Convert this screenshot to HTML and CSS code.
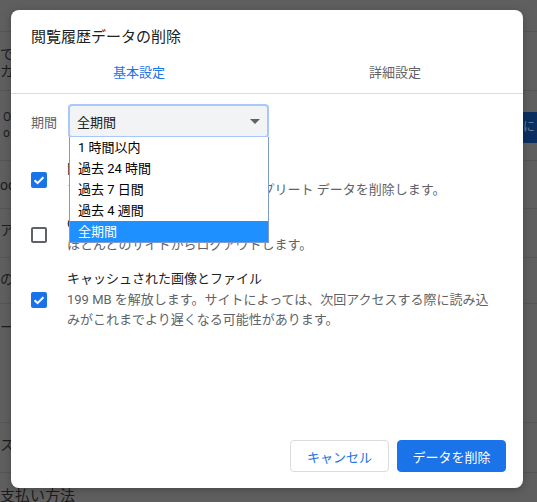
FILE: index.html
```html
<!DOCTYPE html>
<html lang="ja">
<head>
<meta charset="utf-8">
<link rel="stylesheet" href="styles.css">
</head>
<body>
<div class="page">
  <div class="row r0"></div>
  <div class="row r1"><p>でき</p><p>カ</p></div>
  <div class="row r2">
    <div class="r2-text"><p>O</p><p>o</p></div>
    <div class="band">に</div>
  </div>
  <div class="row r3"><p>oo</p></div>
  <div class="row r4"><p>アカ</p></div>
  <div class="row r5"><p>の</p></div>
  <div class="row r6"><p>ー</p></div>
  <div class="row r7"><p>ス</p></div>
  <div class="row r8"><p class="big">支払い方法</p></div>
</div>

<div class="dialog">
  <div class="title">閲覧履歴データの削除</div>
  <div class="tabs">
    <div class="tab active">基本設定</div>
    <div class="tab">詳細設定</div>
  </div>
  <div class="content">
    <div class="period">
      <span class="period-label">期間</span>
      <div class="select">
        <span>全期間</span>
        <span class="arrow"></span>
      </div>
      <ul class="options">
        <li>1 時間以内</li>
        <li>過去 24 時間</li>
        <li>過去 7 日間</li>
        <li>過去 4 週間</li>
        <li class="selected">全期間</li>
      </ul>
    </div>
    <div class="items">
      <div class="item">
        <span class="cb checked"><svg viewBox="0 0 16 16" width="16" height="16"><path d="M3.6 8.3 L6.6 11.2 L12.4 5.2" fill="none" stroke="#fff" stroke-width="2"/></svg></span>
        <div class="item-text">
          <div class="item-title">閲覧履歴</div>
          <div class="item-desc">アドレスバーの履歴とオートコンプリート データを削除します。</div>
        </div>
      </div>
      <div class="item">
        <span class="cb"></span>
        <div class="item-text">
          <div class="item-title">Cookie と他のサイトデータ</div>
          <div class="item-desc">ほとんどのサイトからログアウトします。</div>
        </div>
      </div>
      <div class="item">
        <span class="cb checked"><svg viewBox="0 0 16 16" width="16" height="16"><path d="M3.6 8.3 L6.6 11.2 L12.4 5.2" fill="none" stroke="#fff" stroke-width="2"/></svg></span>
        <div class="item-text">
          <div class="item-title">キャッシュされた画像とファイル</div>
          <div class="item-desc">199 MB を解放します。サイトによっては、次回アクセスする際に読み込みがこれまでより遅くなる可能性があります。</div>
        </div>
      </div>
    </div>
  </div>
  <div class="actions">
    <button class="btn cancel">キャンセル</button>
    <button class="btn primary">データを削除</button>
  </div>
</div>
</body>
</html>
```
FILE: styles.css
```css
* { box-sizing: border-box; }
html, body { margin: 0; padding: 0; }
body {
  width: 537px;
  height: 502px;
  overflow: hidden;
  background: #5f5f5f;
  font-family: Roboto, "Noto Sans CJK JP", sans-serif;
  position: relative;
}
p { margin: 0; }

/* dimmed page behind the dialog */
.page { color: #1c1c1c; font-size: 14px; }
.row { border-bottom: 1px solid #555555; }
.row p { line-height: 17px; white-space: nowrap; }
.r0 { height: 32px; }
.r1 { height: 59px; padding-top: 14px; }
.r2 { height: 70px; display: flex; justify-content: space-between; }
.r2-text { padding-top: 18px; padding-left: 3px; }
.r2-text p { font-size: 12px; line-height: 16px; }
.band {
  margin-top: 21px;
  width: 40px;
  height: 31px;
  background: #0b2f62;
  color: #6d7c96;
  font-size: 12px;
  line-height: 31px;
  padding-left: 26px;
}
.r3 { height: 48px; padding-top: 16px; }
.r4 { height: 49px; padding-top: 13px; }
.r5 { height: 46px; padding-top: 13px; }
.r6 { height: 119px; padding-top: 15px; }
.r7 { height: 50px; padding-top: 14px; }
.r8 { border-bottom: none; padding-top: 15px; }
.r8 .big { font-size: 15px; }

/* dialog */
.dialog {
  position: absolute;
  left: 11px;
  top: 10px;
  width: 512px;
  height: 478px;
  background: #fff;
  border-radius: 8px;
  box-shadow: 0 2px 8px rgba(0,0,0,0.25);
  display: flex;
  flex-direction: column;
}
.title {
  padding: 17px 20px 0;
  font-size: 15px;
  line-height: 20px;
  color: #202124;
}
.tabs {
  display: flex;
  border-bottom: 1px solid #dadce0;
}
.tab {
  flex: 1;
  text-align: center;
  font-size: 13px;
  line-height: 20px;
  padding: 16px 0 10px;
  color: #5f6368;
}
.tab.active { color: #1a73e8; }

.content { padding: 10px 20px 0; }
.period {
  position: relative;
  display: flex;
  align-items: center;
}
.period-label {
  width: 37px;
  font-size: 13px;
  color: #5f6368;
}
.select {
  width: 201px;
  height: 34px;
  border: 2px solid #a8c7fa;
  border-radius: 4px;
  background: #f1f3f4;
  display: flex;
  align-items: center;
  justify-content: space-between;
  padding: 0 7px 0 7px;
  font-size: 13px;
  color: #202124;
}
.arrow {
  width: 0;
  height: 0;
  border-left: 5px solid transparent;
  border-right: 5px solid transparent;
  border-top: 5px solid #5f6368;
  margin-top: 1px;
}
.options {
  position: absolute;
  left: 38px;
  top: 33px;
  width: 200px;
  margin: 0;
  padding: 0;
  list-style: none;
  background: #fff;
  border: 1px solid #7d9bcf;
  border-top: none;
  z-index: 2;
}
.options li {
  height: 21px;
  line-height: 21px;
  padding-left: 8px;
  font-size: 13px;
  color: #000;
}
.options li.selected { background: #1e90ff; color: #fff; }

.items {
  margin-top: 21px;
  display: flex;
  flex-direction: column;
  gap: 14px;
}
.item {
  display: flex;
  align-items: center;
  gap: 20px;
}
.cb {
  flex: none;
  width: 16px;
  height: 16px;
  border: 2px solid #5f6368;
  border-radius: 2px;
  display: flex;
}
.cb.checked {
  border: none;
  background: #1a73e8;
}
.item-text {
  width: 428px;
  font-size: 13px;
  line-height: 20.5px;
}
.item-title { color: #202124; }
.item-desc { color: #5f6368; }

.actions {
  margin-top: auto;
  display: flex;
  justify-content: flex-end;
  gap: 8px;
  padding: 0 17px 16px 0;
}
.btn {
  height: 32px;
  border-radius: 4px;
  font-family: Roboto, "Noto Sans CJK JP", sans-serif;
  font-size: 13px;
  padding: 0;
  cursor: pointer;
}
.cancel {
  width: 99px;
  background: #fff;
  border: 1px solid #dadce0;
  color: #1a73e8;
}
.primary {
  width: 109px;
  background: #1a73e8;
  border: 1px solid #1a73e8;
  color: #fff;
}
```
